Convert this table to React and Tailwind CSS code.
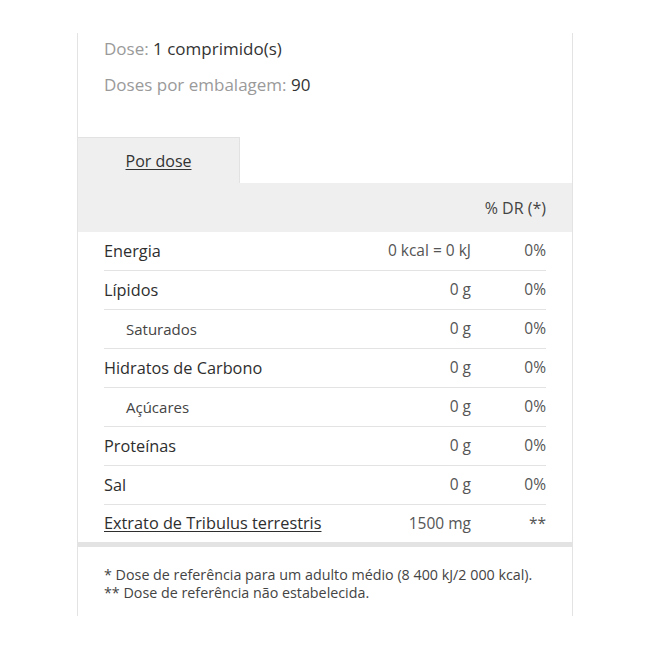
import React from 'react';

const rows = [
  { label: 'Energia', value: '0 kcal = 0 kJ', dr: '0%' },
  { label: 'Lípidos', value: '0 g', dr: '0%' },
  { label: 'Saturados', value: '0 g', dr: '0%', sub: true },
  { label: 'Hidratos de Carbono', value: '0 g', dr: '0%' },
  { label: 'Açúcares', value: '0 g', dr: '0%', sub: true },
  { label: 'Proteínas', value: '0 g', dr: '0%' },
  { label: 'Sal', value: '0 g', dr: '0%' },
];

export default function App() {
  return (
    <div className="w-[650px] h-[650px] bg-white pt-[33px] font-['Open_Sans',sans-serif]">
      <div className="ml-[77px] w-[496px] h-[583px] border-x border-[#e3e3e3]">
        {/* dose info */}
        <div className="pl-[26px] pt-[4px] text-[17px] leading-[24px]">
          <p className="text-[#9a9a9a]">Dose: <span className="text-[#333]">1 comprimido(s)</span></p>
          <p className="mt-[12px] text-[#9a9a9a]">Doses por embalagem: <span className="text-[#333]">90</span></p>
        </div>

        {/* tab */}
        <div className="mt-[40px] w-[162px] h-[46px] bg-[#efefef] border-t border-r border-[#e2e2e2] flex items-center justify-center">
          <span className="text-[16px] text-[#333] underline underline-offset-2">Por dose</span>
        </div>

        {/* header */}
        <div className="h-[49px] bg-[#efefef] flex items-center justify-end pr-[26px]">
          <span className="text-[16px] text-[#444]">% DR (*)</span>
        </div>

        {/* rows */}
        <div className="px-[26px]">
          {rows.map((r) => (
            <div key={r.label} className="h-[39px] border-b border-[#e3e3e3] flex items-center">
              <span className={r.sub ? 'flex-1 pl-[22px] text-[15px] text-[#444]' : 'flex-1 text-[16.3px] text-[#2e2e2e]'}>
                {r.label}
              </span>
              <span className="text-[15.5px] text-[#555]">{r.value}</span>
              <span className="w-[75px] text-right text-[15.5px] text-[#555]">{r.dr}</span>
            </div>
          ))}
          <div className="h-[37px] flex items-center">
            <span className="flex-1 text-[16.3px] text-[#2e2e2e] underline underline-offset-2">Extrato de Tribulus terrestris</span>
            <span className="text-[15.5px] text-[#555]">1500 mg</span>
            <span className="w-[75px] text-right text-[15.5px] text-[#555]">**</span>
          </div>
        </div>
        <div className="h-[5px] bg-[#e3e3e3]" />

        {/* footnotes */}
        <div className="pl-[26px] pt-[19px] text-[14.3px] leading-[18px] text-[#444]">
          <p>* Dose de referência para um adulto médio (8 400 kJ/2 000 kcal).</p>
          <p>** Dose de referência não estabelecida.</p>
        </div>
      </div>
    </div>
  );
}
